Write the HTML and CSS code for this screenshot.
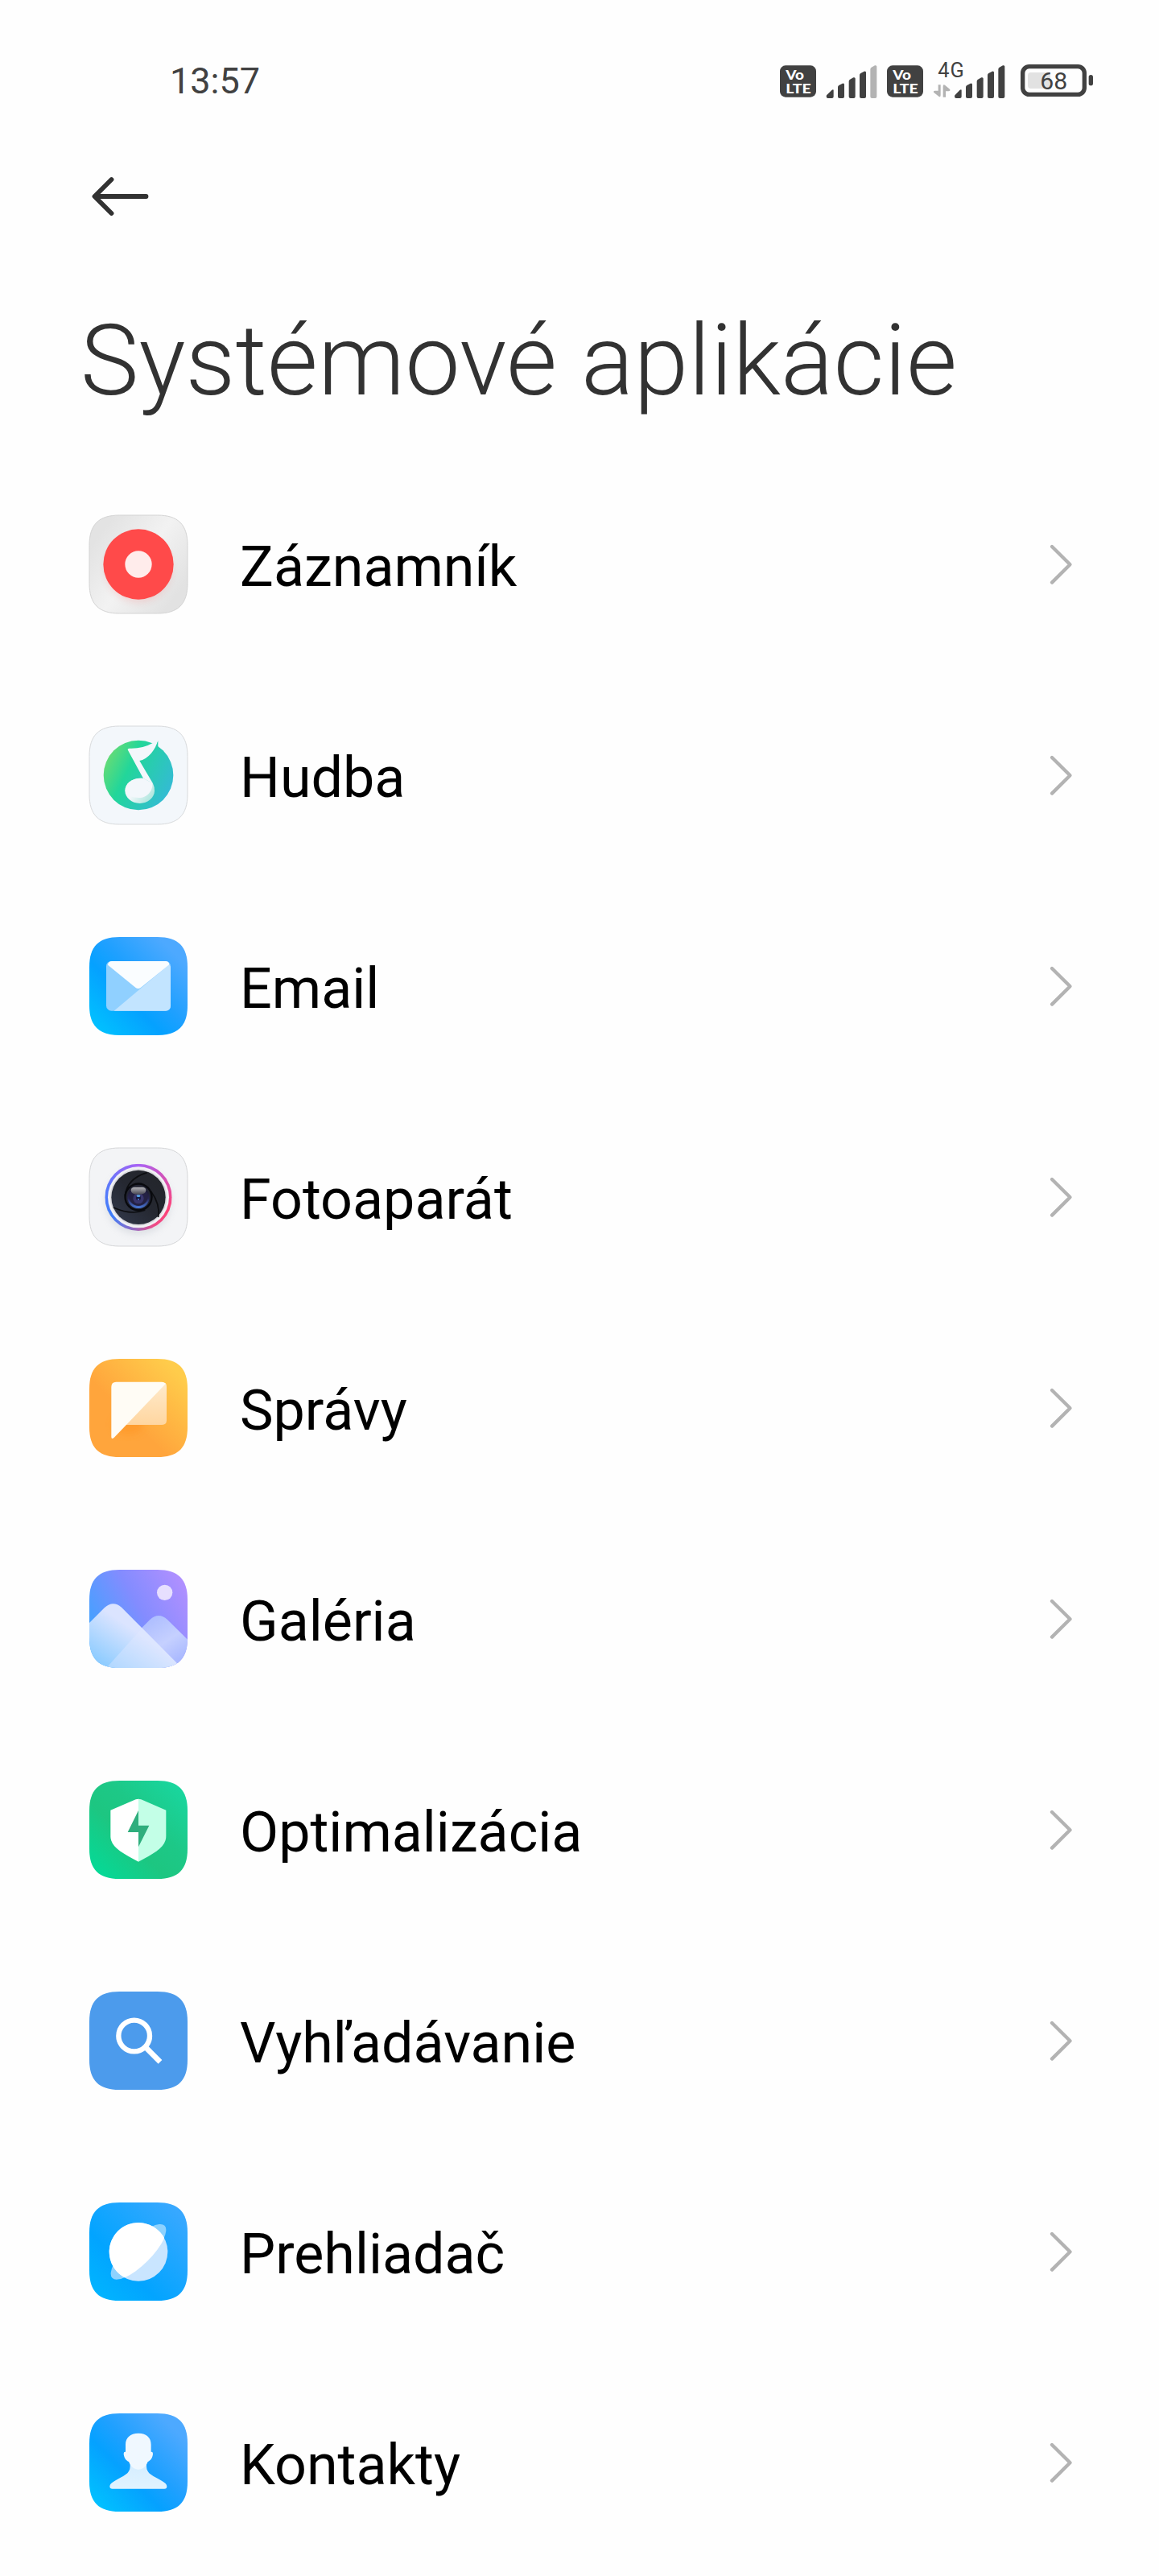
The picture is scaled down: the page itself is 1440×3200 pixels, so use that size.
FILE: index.html
```html
<!DOCTYPE html>
<html lang="sk">
  <head>
    <meta charset="utf-8" />
    <meta name="viewport" content="width=device-width, initial-scale=1.0" />
    <title>Systémové aplikácie</title>
    <link rel="stylesheet" href="styles.css">
  </head>
  <body>
    <!-- shared shapes -->
    <svg class="defs" width="0" height="0">
      <defs>
        <path id="tile" d="M0 112 C0 35 35 0 112 0 H254 C331 0 366 35 366 112 V254 C366 331 331 366 254 366 H112 C35 366 0 331 0 254 Z"/>
        <clipPath id="tile-clip"><use href="#tile"/></clipPath>
        <filter id="soft" x="-30%" y="-30%" width="160%" height="160%"><feGaussianBlur stdDeviation="14"/></filter>
        <linearGradient id="g-grey" x1="0.1" y1="0.2" x2="0.9" y2="0.8">
          <stop offset="0" stop-color="#e3e3e3"/><stop offset="0.5" stop-color="#f2f2f2"/><stop offset="1" stop-color="#e2e2e2"/>
        </linearGradient>
        <linearGradient id="g-blue" x1="0" y1="1" x2="1" y2="0">
          <stop offset="0" stop-color="#00c8ff"/><stop offset="0.38" stop-color="#05a1ff"/><stop offset="0.55" stop-color="#1fa0ff"/><stop offset="0.85" stop-color="#4da9ff"/>
        </linearGradient>
        <linearGradient id="g-browser" x1="0" y1="1" x2="1" y2="0">
          <stop offset="0" stop-color="#00b8ff"/><stop offset="0.35" stop-color="#02a4ff"/><stop offset="0.9" stop-color="#37a8ff"/>
        </linearGradient>
        <linearGradient id="g-music" x1="0" y1="0.25" x2="1" y2="0.75">
          <stop offset="0" stop-color="#6cdc72"/><stop offset="0.35" stop-color="#22d69a"/><stop offset="1" stop-color="#35b9d8"/>
        </linearGradient>
        <linearGradient id="g-note" x1="0.4" y1="0.4" x2="1" y2="0.8">
          <stop offset="0" stop-color="#f3f7fa"/><stop offset="1" stop-color="#a5e4da"/>
        </linearGradient>
        <linearGradient id="g-orange" x1="0.4" y1="0.6" x2="1" y2="0">
          <stop offset="0" stop-color="#ffa53c"/><stop offset="0.8" stop-color="#ffcc4b"/>
        </linearGradient>
        <linearGradient id="g-bubble" x1="0" y1="0" x2="0" y2="1">
          <stop offset="0" stop-color="#ffeacb"/><stop offset="1" stop-color="#ffd6a0"/>
        </linearGradient>
        <linearGradient id="g-sky" x1="0" y1="0.65" x2="1" y2="0.1">
          <stop offset="0" stop-color="#3ea3ff"/><stop offset="0.5" stop-color="#838cff"/><stop offset="1" stop-color="#b490ff"/>
        </linearGradient>
        <linearGradient id="g-hill" x1="0" y1="1" x2="0.6" y2="0.4">
          <stop offset="0" stop-color="#7ac6ff"/><stop offset="0.9" stop-color="#dbe4ff"/>
        </linearGradient>
        <linearGradient id="g-hill2" x1="0.9" y1="0.9" x2="0.3" y2="0.1">
          <stop offset="0" stop-color="#a4b4ff"/><stop offset="0.5" stop-color="#c5d0ff"/><stop offset="1" stop-color="#aebeff"/>
        </linearGradient>
        <linearGradient id="g-green" x1="0" y1="1" x2="1" y2="0">
          <stop offset="0" stop-color="#00dd9b"/><stop offset="0.4" stop-color="#1dc681"/><stop offset="0.6" stop-color="#1dc887"/><stop offset="1" stop-color="#18d9a3"/>
        </linearGradient>
        <linearGradient id="g-person" x1="0" y1="1" x2="0" y2="0">
          <stop offset="0" stop-color="#e0f3ff"/><stop offset="1" stop-color="#d3ecff"/>
        </linearGradient>
        <linearGradient id="g-lens" x1="0" y1="0" x2="0" y2="1">
          <stop offset="0" stop-color="#14141c"/><stop offset="0.55" stop-color="#272452"/><stop offset="1" stop-color="#4a7de0"/>
        </linearGradient>
        <linearGradient id="g-shine" x1="0" y1="0" x2="0" y2="1">
          <stop offset="0" stop-color="#b5b5ba"/><stop offset="1" stop-color="#44444f"/>
        </linearGradient>
        <linearGradient id="g-shutter" x1="0" y1="1" x2="1" y2="0">
          <stop offset="0" stop-color="#333a4d"/><stop offset="0.5" stop-color="#252831"/><stop offset="1" stop-color="#23252a"/>
        </linearGradient>
        <path id="chevron" d="M6 5 L28.5 27.3 L6 49.6"/>
      </defs>
    </svg>

    <header class="status">
      <span class="time">13:57</span>
      <div class="signals">
        <svg width="45" height="80" viewBox="87 0 135 240">
          <rect x="87" y="64" width="135" height="118" rx="21" fill="#414141"/>
          <text class="volte" x="109" y="117" font-size="48" textLength="68" lengthAdjust="spacingAndGlyphs">Vo</text>
          <text class="volte" x="109" y="167" font-size="53" textLength="94" lengthAdjust="spacingAndGlyphs">LTE</text>
        </svg>
        <svg width="64" height="80" viewBox="258 0 192 240" fill="#414141">
          <path d="M260 179 Q260 175 264 172 L281 155 Q287 151 287 157 V180 Q287 186 281 186 H266 Q260 186 260 179Z"/>
          <path d="M303 145 Q303 141 307 138 L320 131 Q327 129 327 135 V180 Q327 186 321 186 H309 Q303 186 303 180Z"/>
          <path d="M344 123 Q344 119 348 116 L361 109 Q368 107 368 113 V180 Q368 186 362 186 H350 Q344 186 344 180Z"/>
          <path d="M384 100 Q384 96 388 93 L401 86 Q408 84 408 90 V180 Q408 186 402 186 H390 Q384 186 384 180Z"/>
          <path fill="#b3b3b3" d="M424 78 Q424 74 428 71 L441 64 Q448 62 448 68 V180 Q448 186 442 186 H430 Q424 186 424 180Z"/>
        </svg>
        <svg width="45" height="80" viewBox="87 0 135 240">
          <rect x="87" y="64" width="135" height="118" rx="21" fill="#414141"/>
          <text class="volte" x="109" y="117" font-size="48" textLength="68" lengthAdjust="spacingAndGlyphs">Vo</text>
          <text class="volte" x="109" y="167" font-size="53" textLength="94" lengthAdjust="spacingAndGlyphs">LTE</text>
        </svg>
        <svg width="91" height="80" viewBox="657 0 273 240" fill="#414141">
          <text class="net" x="676" y="109" font-size="76" textLength="97">4G</text>
          <path fill="#b3b3b3" d="M677 136 H686 V174 Q686 184 679 179 L661 165 Q657 159 665 158 H677Z M695 143 Q695 133 702 137 L720 152 Q724 158 716 160 H705 V182 H695Z"/>
          <path d="M738 179 Q738 175 742 172 L758 155 Q764 151 764 157 V180 Q764 186 758 186 H744 Q738 186 738 179Z"/>
          <path d="M780 145 Q780 141 784 138 L797 131 Q804 129 804 135 V180 Q804 186 798 186 H786 Q780 186 780 180Z"/>
          <path d="M821 123 Q821 119 825 116 L838 109 Q845 107 845 113 V180 Q845 186 839 186 H827 Q821 186 821 180Z"/>
          <path d="M861 100 Q861 96 865 93 L878 86 Q885 84 885 90 V180 Q885 186 879 186 H867 Q861 186 861 180Z"/>
          <path d="M901 78 Q901 74 905 71 L918 64 Q925 62 925 68 V180 Q925 186 919 186 H907 Q901 186 901 180Z"/>
        </svg>
        <svg width="97" height="80" viewBox="966 0 291 240">
          <rect x="992" y="68" width="230" height="104" rx="24" fill="none" stroke="#414141" stroke-width="16"/>
          <path d="M1022 90 H1095 V150 H1022 Q1011 150 1011 139 V101 Q1011 90 1022 90Z" fill="#e2e2e2"/>
          <rect x="1238" y="99" width="16" height="40" rx="8" fill="#414141"/>
          <text class="net" x="1057" y="154" font-size="88" textLength="102" lengthAdjust="spacingAndGlyphs">68</text>
        </svg>
      </div>
    </header>

    <nav class="toolbar">
      <svg width="76" height="54" viewBox="0 0 76 54">
        <path d="M26.5 6 L5.5 27 L26.5 48 M6 27 H69.5" fill="none" stroke="#323232" stroke-width="5.8" stroke-linecap="round" stroke-linejoin="round"/>
      </svg>
    </nav>

    <h1>Systémové aplikácie</h1>

    <ul class="apps">
      <li>
        <svg class="icon" viewBox="0 0 366 366">
          <use href="#tile" fill="url(#g-grey)" stroke="#d4d4d4" stroke-width="3"/>
          <g clip-path="url(#tile-clip)"><circle cx="183" cy="201" r="122" fill="#ff4a4a" opacity="0.18" filter="url(#soft)"/></g>
          <circle cx="183" cy="183" r="131" fill="#ff4a4a"/>
          <circle cx="183" cy="183" r="50" fill="#ffeceb"/>
        </svg>
        <span class="name">Záznamník</span>
        <svg class="arrow" viewBox="0 0 34 54"><use href="#chevron"/></svg>
      </li>
      <li>
        <svg class="icon" viewBox="0 0 366 366">
          <use href="#tile" fill="#f3f7fb" stroke="#d8dadc" stroke-width="3"/>
          <circle cx="183" cy="183" r="130" fill="url(#g-music)"/>
          <path d="M256 55 V80 L236 92 Z" fill="#27cda9"/>
          <path d="M144 90 Q141 83 149 83 Q197 85 238 62 L255 52 Q250 79 230 102 Q210 125 187 129 L237 214 L201 195 Z" fill="#f3f7fb"/>
          <path d="M201 195 L237 214 Q243 226 243 241 C243 267 218 288 188 288 C158 288 133 267 133 241 C133 213 162 191 201 195Z" fill="url(#g-note)"/>
          <path d="M201 195 L235 212 C238 240 215 267 186 267 C160 267 140 258 134 243 C132 213 162 191 201 195Z" fill="#f3f7fb"/>
        </svg>
        <span class="name">Hudba</span>
        <svg class="arrow" viewBox="0 0 34 54"><use href="#chevron"/></svg>
      </li>
      <li>
        <svg class="icon" viewBox="0 0 366 366">
          <use href="#tile" fill="url(#g-blue)"/>
          <rect x="63" y="90" width="240" height="185" rx="19" fill="#90d0ff"/>
          <path d="M297 103 Q303 108 303 113 V256 Q303 275 284 275 H92 Z" fill="#c2e4ff"/>
          <path d="M69 104 Q71 90 84 90 H284 Q297 90 298 103 L192 188 Q182 196 172 188 Z" fill="#fafdff"/>
        </svg>
        <span class="name">Email</span>
        <svg class="arrow" viewBox="0 0 34 54"><use href="#chevron"/></svg>
      </li>
      <li>
        <svg class="icon" viewBox="0 0 366 366">
          <use href="#tile" fill="#f3f4f6" stroke="#d5d6d8" stroke-width="3"/>
          <circle cx="183" cy="200" r="122" fill="#9aa0b0" opacity="0.25" filter="url(#soft)"/>
          <foreignObject x="58" y="59" width="250" height="250"><div class="ring"></div></foreignObject>
          <circle cx="183" cy="184" r="114" fill="#f1f1f4"/>
          <circle cx="183" cy="184" r="106" fill="#d9d9de"/>
          <circle cx="183" cy="184" r="101" fill="url(#g-shutter)"/>
          <path d="M215 92 Q140 115 133 178 M90 222 Q155 252 208 232 M230 162 Q265 210 257 258" fill="none" stroke="#0c0d10" stroke-width="5"/>
          <circle cx="183" cy="183" r="53" fill="#08090d"/>
          <circle cx="183" cy="183" r="46" fill="#232533"/>
          <circle cx="183" cy="184" r="41" fill="url(#g-lens)"/>
          <circle cx="183" cy="181" r="35" fill="#242143"/>
          <circle cx="183" cy="188" r="20" fill="#38356c"/>
          <path d="M155 157 Q156 146 170 146 H196 Q210 146 211 157 Q211 174 183 174 Q155 174 155 157Z" fill="url(#g-shine)"/>
          <circle cx="183" cy="187" r="9" fill="#151a3d"/>
          <ellipse cx="183" cy="179" rx="7" ry="4" fill="#58a6ed"/>
          <circle cx="183" cy="192" r="3" fill="#5d73d8"/>
        </svg>
        <span class="name">Fotoaparát</span>
        <svg class="arrow" viewBox="0 0 34 54"><use href="#chevron"/></svg>
      </li>
      <li>
        <svg class="icon" viewBox="0 0 366 366">
          <use href="#tile" fill="url(#g-orange)"/>
          <ellipse cx="145" cy="245" rx="55" ry="38" fill="#ff9420" opacity="0.55" filter="url(#soft)"/>
          <path d="M284 91 Q288 95 288 104 V229 Q288 246 271 246 H130 Z" fill="url(#g-bubble)"/>
          <path d="M82 104 Q82 86 100 86 H270 Q279 86 285 92 L91 295 Q82 301 82 291 Z" fill="#fffcf5"/>
        </svg>
        <span class="name">Správy</span>
        <svg class="arrow" viewBox="0 0 34 54"><use href="#chevron"/></svg>
      </li>
      <li>
        <svg class="icon" viewBox="0 0 366 366">
          <g clip-path="url(#tile-clip)">
            <rect width="366" height="366" fill="url(#g-sky)"/>
            <circle cx="281" cy="85" r="29" fill="#e7dfff"/>
            <path d="M150 262 L226 186 Q258 156 291 186 L370 264 V370 H150Z" fill="url(#g-hill2)"/>
            <path d="M-4 202 L57 141 Q88 113 120 140 L348 370 H-4Z" fill="url(#g-hill)"/>
            <path d="M197 217 L348 370 H60Z" fill="#e1e8ff" opacity="0.4"/>
          </g>
        </svg>
        <span class="name">Galéria</span>
        <svg class="arrow" viewBox="0 0 34 54"><use href="#chevron"/></svg>
      </li>
      <li>
        <svg class="icon" viewBox="0 0 366 366">
          <use href="#tile" fill="url(#g-green)"/>
          <path d="M183 68 Q178 68 173 70 L79 110 V207 C79 246 121 270 183 302Z" fill="#fff"/>
          <path d="M183 68 Q188 68 193 70 L286 110 V207 C286 246 245 270 183 302Z" fill="#c3ffe7"/>
          <path d="M183 111 L143 192 H183 V247 L223 167 H183Z" fill="#2fae7d"/>
        </svg>
        <span class="name">Optimalizácia</span>
        <svg class="arrow" viewBox="0 0 34 54"><use href="#chevron"/></svg>
      </li>
      <li>
        <svg class="icon" viewBox="0 0 366 366">
          <use href="#tile" fill="#4c9bec"/>
          <circle cx="167" cy="165" r="58" fill="none" stroke="#fff" stroke-width="19"/>
          <path d="M208 206 L264 262" stroke="#fff" stroke-width="20"/>
        </svg>
        <span class="name">Vyhľadávanie</span>
        <svg class="arrow" viewBox="0 0 34 54"><use href="#chevron"/></svg>
      </li>
      <li>
        <svg class="icon" viewBox="0 0 366 366">
          <use href="#tile" fill="url(#g-browser)"/>
          <ellipse cx="183" cy="184" rx="138" ry="47" transform="rotate(-45 183 184)" fill="#8dd2ff"/>
          <circle cx="183" cy="184" r="109" fill="#c9e5ff"/>
          <path d="M279.5 133 A109 109 0 1 0 131.500 280 A138 47 -45 0 0 279.500 133Z" fill="#fff"/>
        </svg>
        <span class="name">Prehliadač</span>
        <svg class="arrow" viewBox="0 0 34 54"><use href="#chevron"/></svg>
      </li>
      <li>
        <svg class="icon" viewBox="0 0 366 366">
          <use href="#tile" fill="url(#g-blue)"/>
          <path d="M152 170 V198 C152 226 126 233 94 252 Q76 262 76 272 Q76 281 86 281 H280 Q289 281 289 272 Q289 262 271 252 C239 233 213 226 213 198 V170Z" fill="url(#g-person)"/>
          <path d="M183 74 C152 74 135 91 135 116 V143 Q128 142 128 150 C129 166 137 176 147 180 C155 200 168 209 183 209 C198 209 211 200 218 180 C228 176 236 166 237 150 Q237 142 230 143 V116 C230 91 214 74 183 74Z" fill="#f0f8ff"/>
        </svg>
        <span class="name">Kontakty</span>
        <svg class="arrow" viewBox="0 0 34 54"><use href="#chevron"/></svg>
      </li>
    </ul>
  </body>
</html>
```

FILE: styles.css
```css
* {
  box-sizing: border-box;
}
body {
  margin: 0;
  height: 3200px;
  overflow: hidden;
  background-color: #fefefe;
  font-family: Roboto, "Liberation Sans", sans-serif;
}
svg {
  display: block;
  flex: none;
}
svg.defs {
  height: 0;
}

header.status {
  display: flex;
  justify-content: space-between;
  height: 140px;
  padding: 60px 81px 0 211px;
}
header.status .time {
  font-size: 45px;
  line-height: 82px;
  color: #414141;
}
header.status .signals {
  display: flex;
  gap: 12px;
}
text.volte {
  font-family: Lato, sans-serif;
  font-weight: 900;
  fill: #ffffff;
}
text.net {
  font-family: Roboto, sans-serif;
  fill: #414141;
}

nav.toolbar {
  height: 230px;
  padding: 77px 0 0 112px;
}

h1 {
  margin: 0;
  height: 200px;
  padding-left: 100px;
  font-size: 122px;
  font-weight: 300;
  line-height: 158px;
  letter-spacing: 0.1px;
  white-space: nowrap;
  color: #323232;
}

ul.apps {
  margin: 0;
  padding: 0;
  list-style-type: none;
}
ul.apps li {
  display: flex;
  align-items: center;
  height: 262px;
  padding: 0 105px 0 111px;
}
ul.apps .icon {
  width: 122px;
  height: 122px;
  overflow: visible;
}
ul.apps .name {
  flex: 1;
  padding: 5px 0 0 65px;
  font-size: 70px;
  line-height: 82px;
  color: #000000;
}
ul.apps .arrow {
  width: 34px;
  height: 54px;
  fill: none;
  stroke: #b3b3b3;
  stroke-width: 4.3;
  stroke-linecap: round;
  stroke-linejoin: round;
}
.ring {
  width: 250px;
  height: 250px;
  border-radius: 50%;
  background: conic-gradient(#a962f5, #d052bb 50deg, #ff4277 110deg, #ef4b86 150deg, #9a66bd 185deg, #3f7ffa 235deg, #5b79fb 290deg, #a962f5);
}
```
